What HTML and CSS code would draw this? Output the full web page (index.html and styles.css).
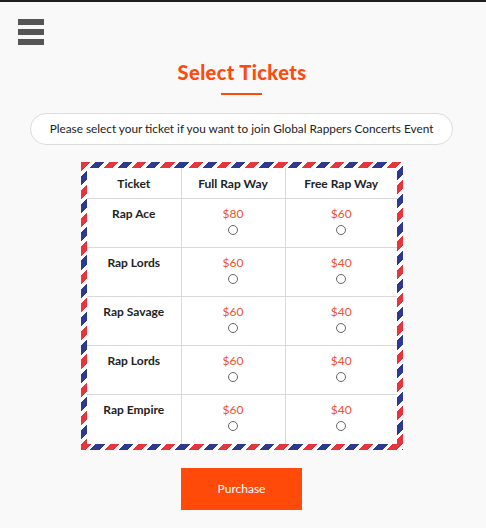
FILE: index.html
```html
<!DOCTYPE html>
<html>
<head>
<meta charset="utf-8">
<link rel="stylesheet" href="styles.css">
</head>
<body>
<div class="page">
  <div class="menu" aria-label="menu">
    <span class="bar"></span><span class="bar"></span><span class="bar"></span>
  </div>
  <h1 class="title">Select Tickets</h1>
  <div class="rule"></div>
  <p class="note">Please select your ticket if you want to join Global Rappers Concerts Event</p>
  <div class="airmail">
    <table class="tickets">
      <colgroup><col class="c1"><col class="c2"><col class="c3"></colgroup>
      <thead>
        <tr><th>Ticket</th><th>Full Rap Way</th><th>Free Rap Way</th></tr>
      </thead>
      <tbody>
        <tr><td class="name">Rap Ace</td><td><span class="price">$80</span><span class="radio"></span></td><td><span class="price">$60</span><span class="radio"></span></td></tr>
        <tr><td class="name">Rap Lords</td><td><span class="price">$60</span><span class="radio"></span></td><td><span class="price">$40</span><span class="radio"></span></td></tr>
        <tr><td class="name">Rap Savage</td><td><span class="price">$60</span><span class="radio"></span></td><td><span class="price">$40</span><span class="radio"></span></td></tr>
        <tr><td class="name">Rap Lords</td><td><span class="price">$60</span><span class="radio"></span></td><td><span class="price">$40</span><span class="radio"></span></td></tr>
        <tr><td class="name">Rap Empire</td><td><span class="price">$60</span><span class="radio"></span></td><td><span class="price">$40</span><span class="radio"></span></td></tr>
      </tbody>
    </table>
  </div>
  <div class="actions"><button class="buy">Purchase</button></div>
</div>
</body>
</html>
```
FILE: styles.css
```css
html, body { margin: 0; padding: 0; }
body {
  background: #f9f9f9;
  border-top: 2px solid #1e1e1e;
  font-family: Lato, "Open Sans", sans-serif;
  color: #222;
  height: 526px;
  overflow: hidden;
}
.page { width: 486px; }
.menu {
  display: flex;
  flex-direction: column;
  gap: 4px;
  padding: 17px 0 0 18px;
  width: 26px;
}
.bar { display: block; width: 26px; height: 6px; background: #555; }
.title {
  margin: 15px 0 0;
  text-align: center;
  font-family: Lato, sans-serif;
  font-weight: 900;
  font-size: 20px;
  line-height: 24px;
  letter-spacing: 0.4px;
  color: #ff4a0d;
  padding-right: 2px;
}
.rule {
  width: 41px;
  height: 2px;
  background: #ff4a0d;
  margin: 9px auto 0 221px;
}
.note {
  box-sizing: border-box;
  width: 423px;
  height: 32px;
  margin: 18px 0 0 30px;
  border: 1px solid #dcdcdc;
  border-radius: 16px;
  background: #fff;
  font-size: 11.8px;
  line-height: 30px;
  text-align: center;
  color: #222;
}
.airmail {
  box-sizing: border-box;
  width: 322px;
  margin: 17px 0 0 81px;
  padding: 6px;
  background: repeating-linear-gradient(135deg,
    #e8343c 0 6.5px, #fff 6.5px 10px, #2e3a92 10px 16.5px, #fff 16.5px 20px);
}
.tickets {
  width: 310px;
  border-collapse: collapse;
  background: #fff;
  table-layout: fixed;
}
.c1 { width: 94px; }
.c2 { width: 104px; }
.c3 { width: 112px; }
.tickets th, .tickets td {
  border: 1px solid #d9d9d9;
  text-align: center;
  font-size: 12px;
}
.tickets tr > :first-child { border-left: 0; }
.tickets tr > :last-child { border-right: 0; }
.tickets thead th { border-top: 0; }
.tickets tbody tr:last-child td { border-bottom: 0; }
.tickets th {
  height: 30px;
  padding: 0;
  font-weight: 700;
  line-height: 15px;
}
.tickets td {
  height: 49px;
  padding: 7px 0 0;
  vertical-align: top;
  box-sizing: border-box;
}
.tickets td.name { font-weight: 700; }
.price { display: block; color: #f0532e; line-height: 15px; }
.radio {
  display: block;
  width: 8px;
  height: 8px;
  margin: 4px auto 0;
  border: 1px solid #666;
  border-radius: 50%;
  background: #fff;
}
.actions { display: flex; justify-content: flex-start; padding: 18px 0 0 181px; }
.buy {
  width: 121px;
  height: 42px;
  border: 0;
  background: #ff4a0a;
  color: #fff;
  font-family: Lato, sans-serif;
  font-size: 12px;
}
```
